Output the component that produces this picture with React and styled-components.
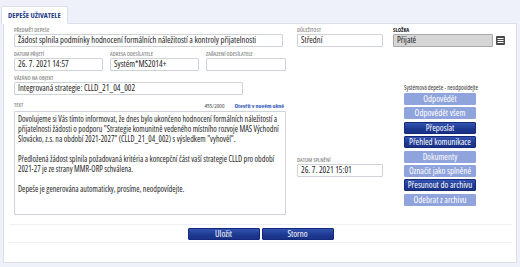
import React from "react";
import styled, { createGlobalStyle } from "styled-components";

const Global = createGlobalStyle`
  html, body { margin: 0; padding: 0; background: #eef1f9; }
  body {
    font-family: "Open Sans", "Liberation Sans", sans-serif;
    font-stretch: 75%;
    color: #222;
  }
  * { box-sizing: border-box; }
`;

const Page = styled.div`
  width: 520px;
  height: 267px;
  padding: 6px 3px 4px 3px;
  display: flex;
  flex-direction: column;
`;

const Tabs = styled.div`
  display: flex;
  height: 18px;
  position: relative;
  z-index: 1;
  margin-left: -2px;
`;

const Tab = styled.div`
  background: #fff;
  border: 1px solid #dcdfe7;
  border-bottom-color: #fff;
  border-radius: 2px 2px 0 0;
  padding: 0 6px;
  font-size: 7.6px;
  font-weight: 700;
  color: #1f3c88;
  display: flex;
  align-items: center;
  height: 18px;
`;

const Panel = styled.div`
  flex: 1;
  background: #fff;
  border: 1px solid #dcdfe7;
  margin-top: -1px;
  padding: 3px 11px 0 10px;
  display: flex;
  flex-direction: column;
`;

const Body = styled.div`
  display: flex;
  gap: 11px;
`;

const Col = styled.div`
  width: ${(p) => p.$w}px;
  display: flex;
  flex-direction: column;
  gap: 4px;
  margin-left: ${(p) => p.$ml || 0}px;
`;

const Row = styled.div`
  display: flex;
  gap: 7px;
`;

const Field = styled.div`
  display: flex;
  flex-direction: column;
  width: ${(p) => (p.$w ? `${p.$w}px` : "auto")};
  margin-top: ${(p) => p.$mt || 0}px;
`;

const Label = styled.div`
  font-size: 5.6px;
  line-height: 7px;
  height: 7px;
  color: ${(p) => (p.$strong ? "#222" : "#8d8d8d")};
  font-weight: ${(p) => (p.$strong ? 700 : 600)};
  text-transform: uppercase;
  white-space: nowrap;
`;

const Input = styled.div`
  height: 13px;
  width: ${(p) => (p.$w ? `${p.$w}px` : "auto")};
  border: 1px solid ${(p) => (p.$grey ? "#a9a9a9" : "#cfd2d8")};
  border-radius: 1px;
  background: ${(p) => (p.$grey ? "#d6d6d6" : "#fff")};
  font-size: 8.6px;
  line-height: 11px;
  padding: 0 3px;
  color: #1d1d1d;
  white-space: nowrap;
  overflow: hidden;
  flex: ${(p) => (p.$flex ? 1 : "none")};
`;

const SelectRow = styled.div`
  display: flex;
  align-items: center;
  gap: 3px;
`;

const IconBtn = styled.div`
  width: 9px;
  height: 9px;
  background: #4a4a4a;
  border-radius: 1px;
  display: flex;
  align-items: center;
  justify-content: center;
`;

const TextHead = styled.div`
  display: flex;
  align-items: center;
  height: 9px;
  margin-top: 2px;
`;

const Counter = styled.span`
  margin-left: auto;
  font-size: 6px;
  color: #444;
  margin-right: 10px;
`;

const Link = styled.span`
  font-size: 6px;
  font-weight: 700;
  color: #2b55b5;
  margin-right: 2px;
`;

const TextArea = styled.div`
  height: 104px;
  border: 1px solid #cfd2d8;
  border-radius: 1px;
  padding: 2px 3px;
  font-size: 8px;
  line-height: 10px;
  color: #1d1d1d;
  margin-top: 1px;
  white-space: nowrap;
  overflow: hidden;
  & p { margin: 0 0 10px 0; }
`;

const Note = styled.div`
  font-size: 6.2px;
  color: #333;
  margin: 33px 0 2px 11px;
  line-height: 7px;
  white-space: nowrap;
`;

const Buttons = styled.div`
  display: flex;
  flex-direction: column;
  gap: 2.4px;
  margin-left: 11px;
  width: 72px;
`;

const Btn = styled.div`
  height: 12px;
  width: ${(p) => p.$w || 72}px;
  display: flex;
  align-items: center;
  justify-content: center;
  font-size: 8.8px;
  font-weight: 500;
  color: #fff;
  border-radius: 1px;
  background: ${(p) =>
    p.$dark
      ? "linear-gradient(#3354b3, #1c3890 60%, #1a3286)"
      : "#8fa3dc"};
  border: 1px solid ${(p) => (p.$dark ? "#15297a" : "#8fa3dc")};
  white-space: nowrap;
`;

const Footer = styled.div`
  margin: 9px -7px 0 -5px;
  border-top: 1px solid #eeeff2;
  border-bottom: 1px solid #eeeff2;
  height: 19px;
  display: flex;
  justify-content: center;
  align-items: center;
  gap: 2px;
`;

const ListIcon = () => (
  <svg width="7" height="7" viewBox="0 0 7 7">
    <rect x="0.5" y="1" width="6" height="1" fill="#fff" />
    <rect x="0.5" y="3" width="6" height="1" fill="#fff" />
    <rect x="0.5" y="5" width="6" height="1" fill="#fff" />
  </svg>
);

export default function App() {
  return (
    <>
      <Global />
      <Page>
        <Tabs>
          <Tab>DEPEŠE UŽIVATELE</Tab>
        </Tabs>
        <Panel>
          <Body>
            <Col $w={272}>
              <Field>
                <Label>Předmět depeše</Label>
                <Input $w={269}>
                  Žádost splnila podmínky hodnocení formálních náležitostí a kontroly přijatelnosti
                </Input>
              </Field>
              <Row>
                <Field $w={89}>
                  <Label>Datum přijetí</Label>
                  <Input>26. 7. 2021 14:57</Input>
                </Field>
                <Field $w={89}>
                  <Label>Adresa odesílatele</Label>
                  <Input>Systém*MS2014+</Input>
                </Field>
                <Field $w={80}>
                  <Label>Zařazení odesílatele</Label>
                  <Input />
                </Field>
              </Row>
              <Field>
                <Label>Vázáno na objekt</Label>
                <Input $w={229}>Integrovaná strategie: CLLD_21_04_002</Input>
              </Field>
              <Field>
                <TextHead>
                  <Label>Text</Label>
                  <Counter>455/2000</Counter>
                  <Link>Otevřít v novém okně</Link>
                </TextHead>
                <TextArea>
                  <p>
                    Dovolujeme si Vás tímto informovat, že dnes bylo ukončeno hodnocení formálních náležitostí a
                    <br />
                    přijatelnosti žádosti o podporu "Strategie komunitně vedeného místního rozvoje MAS Východní
                    <br />
                    Slovácko, z.s. na období 2021-2027" (CLLD_21_04_002) s výsledkem "vyhověl".
                  </p>
                  <p>
                    Předložená žádost splnila požadovaná kritéria a koncepční část vaší strategie CLLD pro období
                    <br />
                    2021-27 je ze strany MMR-ORP schválena.
                  </p>
                  <p>Depeše je generována automaticky, prosíme, neodpovídejte.</p>
                </TextArea>
              </Field>
            </Col>
            <Col $w={86}>
              <Field>
                <Label>Důležitost</Label>
                <Input>Střední</Input>
              </Field>
              <Field $mt={106}>
                <Label>Datum splnění</Label>
                <Input>26. 7. 2021 15:01</Input>
              </Field>
            </Col>
            <Col $w={112} $ml={-1}>
              <Field>
                <Label $strong>Složka</Label>
                <SelectRow>
                  <Input $grey $flex>Přijaté</Input>
                  <IconBtn>
                    <ListIcon />
                  </IconBtn>
                </SelectRow>
              </Field>
              <div>
                <Note>Systémová depeše - neodpovídejte</Note>
                <Buttons>
                  <Btn>Odpovědět</Btn>
                  <Btn>Odpovědět všem</Btn>
                  <Btn $dark>Přeposlat</Btn>
                  <Btn $dark>Přehled komunikace</Btn>
                  <Btn>Dokumenty</Btn>
                  <Btn>Označit jako splněné</Btn>
                  <Btn $dark>Přesunout do archivu</Btn>
                  <Btn>Odebrat z archivu</Btn>
                </Buttons>
              </div>
            </Col>
          </Body>
          <Footer>
            <Btn $dark $w={72}>Uložit</Btn>
            <Btn $dark $w={72}>Storno</Btn>
          </Footer>
        </Panel>
      </Page>
    </>
  );
}
